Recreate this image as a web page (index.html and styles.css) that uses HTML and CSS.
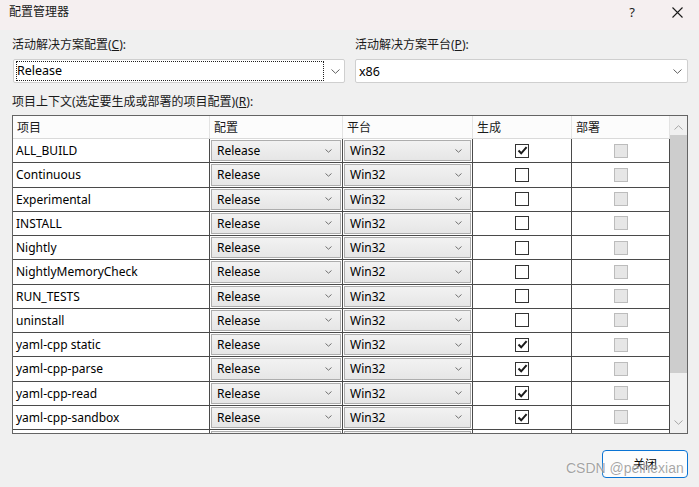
FILE: index.html
```html
<!DOCTYPE html>
<html lang="zh-CN">
<head>
<meta charset="utf-8">
<title>配置管理器</title>
<link rel="stylesheet" href="styles.css">
</head>
<body>
<div class="win">
  <div class="titlebar">
    <span class="title">配置管理器</span>
    <span class="tb-btn help">?</span>
    <span class="tb-btn close"><svg width="11" height="11" viewBox="0 0 11 11"><path d="M0.5 0.5 L10.5 10.5 M10.5 0.5 L0.5 10.5" stroke="#1a1a1a" stroke-width="1.1" fill="none"/></svg></span>
  </div>
  <div class="content">
    <div class="top-fields">
      <div class="field">
        <div class="label">活动解决方案配置(<u>C</u>):</div>
        <div class="combo">
          <span class="focusrect">Release</span>
          <svg class="chev" width="9" height="5" viewBox="0 0 9 5"><path d="M0.5 0.5 L4.5 4.3 L8.5 0.5" stroke="#606060" fill="none"/></svg>
        </div>
      </div>
      <div class="field">
        <div class="label">活动解决方案平台(<u>P</u>):</div>
        <div class="combo">
          <span class="plain">x86</span>
          <svg class="chev" width="9" height="5" viewBox="0 0 9 5"><path d="M0.5 0.5 L4.5 4.3 L8.5 0.5" stroke="#606060" fill="none"/></svg>
        </div>
      </div>
    </div>
    <div class="label ctx">项目上下文(选定要生成或部署的项目配置)(<u>R</u>):</div>
    <div class="grid-wrap">
      <div class="grid">
        <div class="row head">
          <div class="c c1">项目</div><div class="c c2">配置</div><div class="c c3">平台</div><div class="c c4">生成</div><div class="c c5">部署</div>
        </div>
        <div class="row">
          <div class="c c1">ALL_BUILD</div>
          <div class="c c2"><div class="dd">Release<svg class="dchev" width="7" height="4" viewBox="0 0 7 4"><path d="M0.5 0.5 L3.5 3.2 L6.5 0.5" stroke="#707070" fill="none"/></svg></div></div>
          <div class="c c3"><div class="dd">Win32<svg class="dchev" width="7" height="4" viewBox="0 0 7 4"><path d="M0.5 0.5 L3.5 3.2 L6.5 0.5" stroke="#707070" fill="none"/></svg></div></div>
          <div class="c c4"><span class="cb on"><svg width="11" height="11" viewBox="0 0 11 11"><path d="M1.5 5.5 L4.2 8.3 L9.6 2.2" stroke="#1a1a1a" stroke-width="2" fill="none"/></svg></span></div>
          <div class="c c5"><span class="cb dis"></span></div>
        </div>
        <div class="row">
          <div class="c c1">Continuous</div>
          <div class="c c2"><div class="dd">Release<svg class="dchev" width="7" height="4" viewBox="0 0 7 4"><path d="M0.5 0.5 L3.5 3.2 L6.5 0.5" stroke="#707070" fill="none"/></svg></div></div>
          <div class="c c3"><div class="dd">Win32<svg class="dchev" width="7" height="4" viewBox="0 0 7 4"><path d="M0.5 0.5 L3.5 3.2 L6.5 0.5" stroke="#707070" fill="none"/></svg></div></div>
          <div class="c c4"><span class="cb"></span></div>
          <div class="c c5"><span class="cb dis"></span></div>
        </div>
        <div class="row">
          <div class="c c1">Experimental</div>
          <div class="c c2"><div class="dd">Release<svg class="dchev" width="7" height="4" viewBox="0 0 7 4"><path d="M0.5 0.5 L3.5 3.2 L6.5 0.5" stroke="#707070" fill="none"/></svg></div></div>
          <div class="c c3"><div class="dd">Win32<svg class="dchev" width="7" height="4" viewBox="0 0 7 4"><path d="M0.5 0.5 L3.5 3.2 L6.5 0.5" stroke="#707070" fill="none"/></svg></div></div>
          <div class="c c4"><span class="cb"></span></div>
          <div class="c c5"><span class="cb dis"></span></div>
        </div>
        <div class="row">
          <div class="c c1">INSTALL</div>
          <div class="c c2"><div class="dd">Release<svg class="dchev" width="7" height="4" viewBox="0 0 7 4"><path d="M0.5 0.5 L3.5 3.2 L6.5 0.5" stroke="#707070" fill="none"/></svg></div></div>
          <div class="c c3"><div class="dd">Win32<svg class="dchev" width="7" height="4" viewBox="0 0 7 4"><path d="M0.5 0.5 L3.5 3.2 L6.5 0.5" stroke="#707070" fill="none"/></svg></div></div>
          <div class="c c4"><span class="cb"></span></div>
          <div class="c c5"><span class="cb dis"></span></div>
        </div>
        <div class="row">
          <div class="c c1">Nightly</div>
          <div class="c c2"><div class="dd">Release<svg class="dchev" width="7" height="4" viewBox="0 0 7 4"><path d="M0.5 0.5 L3.5 3.2 L6.5 0.5" stroke="#707070" fill="none"/></svg></div></div>
          <div class="c c3"><div class="dd">Win32<svg class="dchev" width="7" height="4" viewBox="0 0 7 4"><path d="M0.5 0.5 L3.5 3.2 L6.5 0.5" stroke="#707070" fill="none"/></svg></div></div>
          <div class="c c4"><span class="cb"></span></div>
          <div class="c c5"><span class="cb dis"></span></div>
        </div>
        <div class="row">
          <div class="c c1">NightlyMemoryCheck</div>
          <div class="c c2"><div class="dd">Release<svg class="dchev" width="7" height="4" viewBox="0 0 7 4"><path d="M0.5 0.5 L3.5 3.2 L6.5 0.5" stroke="#707070" fill="none"/></svg></div></div>
          <div class="c c3"><div class="dd">Win32<svg class="dchev" width="7" height="4" viewBox="0 0 7 4"><path d="M0.5 0.5 L3.5 3.2 L6.5 0.5" stroke="#707070" fill="none"/></svg></div></div>
          <div class="c c4"><span class="cb"></span></div>
          <div class="c c5"><span class="cb dis"></span></div>
        </div>
        <div class="row">
          <div class="c c1">RUN_TESTS</div>
          <div class="c c2"><div class="dd">Release<svg class="dchev" width="7" height="4" viewBox="0 0 7 4"><path d="M0.5 0.5 L3.5 3.2 L6.5 0.5" stroke="#707070" fill="none"/></svg></div></div>
          <div class="c c3"><div class="dd">Win32<svg class="dchev" width="7" height="4" viewBox="0 0 7 4"><path d="M0.5 0.5 L3.5 3.2 L6.5 0.5" stroke="#707070" fill="none"/></svg></div></div>
          <div class="c c4"><span class="cb"></span></div>
          <div class="c c5"><span class="cb dis"></span></div>
        </div>
        <div class="row">
          <div class="c c1">uninstall</div>
          <div class="c c2"><div class="dd">Release<svg class="dchev" width="7" height="4" viewBox="0 0 7 4"><path d="M0.5 0.5 L3.5 3.2 L6.5 0.5" stroke="#707070" fill="none"/></svg></div></div>
          <div class="c c3"><div class="dd">Win32<svg class="dchev" width="7" height="4" viewBox="0 0 7 4"><path d="M0.5 0.5 L3.5 3.2 L6.5 0.5" stroke="#707070" fill="none"/></svg></div></div>
          <div class="c c4"><span class="cb"></span></div>
          <div class="c c5"><span class="cb dis"></span></div>
        </div>
        <div class="row">
          <div class="c c1">yaml-cpp static</div>
          <div class="c c2"><div class="dd">Release<svg class="dchev" width="7" height="4" viewBox="0 0 7 4"><path d="M0.5 0.5 L3.5 3.2 L6.5 0.5" stroke="#707070" fill="none"/></svg></div></div>
          <div class="c c3"><div class="dd">Win32<svg class="dchev" width="7" height="4" viewBox="0 0 7 4"><path d="M0.5 0.5 L3.5 3.2 L6.5 0.5" stroke="#707070" fill="none"/></svg></div></div>
          <div class="c c4"><span class="cb on"><svg width="11" height="11" viewBox="0 0 11 11"><path d="M1.5 5.5 L4.2 8.3 L9.6 2.2" stroke="#1a1a1a" stroke-width="2" fill="none"/></svg></span></div>
          <div class="c c5"><span class="cb dis"></span></div>
        </div>
        <div class="row">
          <div class="c c1">yaml-cpp-parse</div>
          <div class="c c2"><div class="dd">Release<svg class="dchev" width="7" height="4" viewBox="0 0 7 4"><path d="M0.5 0.5 L3.5 3.2 L6.5 0.5" stroke="#707070" fill="none"/></svg></div></div>
          <div class="c c3"><div class="dd">Win32<svg class="dchev" width="7" height="4" viewBox="0 0 7 4"><path d="M0.5 0.5 L3.5 3.2 L6.5 0.5" stroke="#707070" fill="none"/></svg></div></div>
          <div class="c c4"><span class="cb on"><svg width="11" height="11" viewBox="0 0 11 11"><path d="M1.5 5.5 L4.2 8.3 L9.6 2.2" stroke="#1a1a1a" stroke-width="2" fill="none"/></svg></span></div>
          <div class="c c5"><span class="cb dis"></span></div>
        </div>
        <div class="row">
          <div class="c c1">yaml-cpp-read</div>
          <div class="c c2"><div class="dd">Release<svg class="dchev" width="7" height="4" viewBox="0 0 7 4"><path d="M0.5 0.5 L3.5 3.2 L6.5 0.5" stroke="#707070" fill="none"/></svg></div></div>
          <div class="c c3"><div class="dd">Win32<svg class="dchev" width="7" height="4" viewBox="0 0 7 4"><path d="M0.5 0.5 L3.5 3.2 L6.5 0.5" stroke="#707070" fill="none"/></svg></div></div>
          <div class="c c4"><span class="cb on"><svg width="11" height="11" viewBox="0 0 11 11"><path d="M1.5 5.5 L4.2 8.3 L9.6 2.2" stroke="#1a1a1a" stroke-width="2" fill="none"/></svg></span></div>
          <div class="c c5"><span class="cb dis"></span></div>
        </div>
        <div class="row">
          <div class="c c1">yaml-cpp-sandbox</div>
          <div class="c c2"><div class="dd">Release<svg class="dchev" width="7" height="4" viewBox="0 0 7 4"><path d="M0.5 0.5 L3.5 3.2 L6.5 0.5" stroke="#707070" fill="none"/></svg></div></div>
          <div class="c c3"><div class="dd">Win32<svg class="dchev" width="7" height="4" viewBox="0 0 7 4"><path d="M0.5 0.5 L3.5 3.2 L6.5 0.5" stroke="#707070" fill="none"/></svg></div></div>
          <div class="c c4"><span class="cb on"><svg width="11" height="11" viewBox="0 0 11 11"><path d="M1.5 5.5 L4.2 8.3 L9.6 2.2" stroke="#1a1a1a" stroke-width="2" fill="none"/></svg></span></div>
          <div class="c c5"><span class="cb dis"></span></div>
        </div>
        <div class="row">
          <div class="c c1"></div>
          <div class="c c2"><div class="dd"></div></div>
          <div class="c c3"><div class="dd"></div></div>
          <div class="c c4"></div>
          <div class="c c5"></div>
        </div>
      </div>
      <div class="vscroll">
        <svg class="sarrow" width="9" height="5" viewBox="0 0 9 5"><path d="M0.5 4.5 L4.5 0.7 L8.5 4.5" stroke="#a6a6a6" fill="none"/></svg>
        <div class="thumb"></div>
        <div class="track"></div>
        <svg class="sarrow" width="9" height="5" viewBox="0 0 9 5"><path d="M0.5 0.5 L4.5 4.3 L8.5 0.5" stroke="#a6a6a6" fill="none"/></svg>
      </div>
    </div>
    <div class="footer">
      <div class="btn">关闭</div>
    </div>
  </div>
  <div class="watermark">CSDN @peihexian</div>
</div>
</body>
</html>
```

FILE: styles.css
```css
* { box-sizing: border-box; }
html, body { margin: 0; padding: 0; }
body {
  width: 699px;
  height: 487px;
  overflow: hidden;
  background: #f0f0f0;
  font-family: "Noto Sans", "Noto Sans CJK SC", sans-serif;
  font-size: 12px;
  color: #000;
}
.win {
  position: relative;
  width: 699px;
  height: 487px;
}
.titlebar {
  height: 30px;
  display: flex;
  align-items: flex-start;
  background: #f5eff0;
}
.title {
  padding-left: 9px;
  line-height: 24px;
  flex: 1;
  color: #1a1a1a;
}
.tb-btn {
  height: 24px;
  display: flex;
  align-items: center;
  justify-content: center;
}
.help { width: 46px; font-size: 13px; color: #1a1a1a; }
.close { width: 44px; }
.content {
  padding: 0 11px 0 12px;
}
.top-fields {
  display: grid;
  grid-template-columns: 333px 333px;
  column-gap: 10px;
  margin-top: 6px;
}
.label {
  line-height: 18px;
  height: 18px;
  color: #1a1a1a;
}
.field .label { margin-bottom: 5px; }
.combo {
  height: 24px;
  background: #fff;
  border: 1px solid #cfcfcf;
  border-radius: 2px;
  display: flex;
  align-items: center;
  padding: 2px 4px 2px 2px;
  font-size: 12.5px;
}
.field:first-child .combo { margin-left: 1px; }
.field:last-child .combo { padding-right: 5px; }
.focusrect {
  flex: 1;
  height: 20px;
  line-height: 18px;
  padding-left: 0;
  border: 1px dotted #202020;
  margin-right: 7px;
}
.plain { flex: 1; padding-left: 1px; }
.chev { flex: none; }
.ctx { margin-top: 10px; }
.grid-wrap {
  margin-top: 4px;
  height: 319px;
  width: 676px;
  border: 1px solid #646464;
  display: flex;
  overflow: hidden;
}
.grid {
  width: 657px;
  flex: none;
  overflow: hidden;
  background: #fff;
}
.row {
  display: flex;
  height: 24.25px;
  border-bottom: 1px solid #4a4a4a;
}
.row.head {
  height: 23px;
  background: #fcfcfc;
  border-bottom: 1px solid #dadada;
}
.c {
  border-right: 1px solid #4a4a4a;
  display: flex;
  align-items: center;
  height: 100%;
}
.head .c { border-right-color: #e3e3e3; padding-left: 4px; color: #1a1a1a; justify-content: flex-start; }
.c1 { width: 197px; padding-left: 3px; }
.c2 { width: 133px; padding: 1px; }
.c3 { width: 130px; padding: 1px; }
.c4 { width: 99px; justify-content: center; }
.c5 { width: 98px; justify-content: center; }
.dd {
  width: 100%;
  height: 100%;
  border: 1px solid #adadad;
  background: linear-gradient(#f2f2f2, #e6e6e6);
  display: flex;
  align-items: center;
  padding: 0 8px 0 5px;
  justify-content: space-between;
}
.dchev { flex: none; }
.cb {
  width: 14px;
  height: 14px;
  border: 1px solid #333;
  background: #fff;
  display: flex;
  align-items: center;
  justify-content: center;
}
.cb.dis {
  border-color: #bcbcbc;
  background: #e6e6e6;
}
.vscroll {
  width: 17px;
  flex: none;
  background: #f0f0f0;
  display: flex;
  flex-direction: column;
  align-items: center;
}
.vscroll .sarrow:first-child { margin-top: 9px; }
.thumb {
  width: 17px;
  height: 238px;
  margin-top: 5px;
  background: #cdcdcd;
}
.track { flex: 1; }
.vscroll .sarrow:last-child { margin-bottom: 8px; }
.footer {
  display: flex;
  justify-content: flex-end;
  margin-top: 16px;
}
.btn {
  width: 86px;
  height: 28px;
  border: 1px solid #0a74d4;
  border-radius: 4px;
  background: #fdfdfd;
  display: flex;
  align-items: center;
  justify-content: center;
  color: #000;
}
.watermark {
  position: absolute;
  left: 566px;
  top: 460px;
  font-family: "Liberation Sans", sans-serif;
  font-size: 14px;
  color: rgba(90, 90, 90, 0.55);
  text-shadow: 0 0 2px #fff;
  pointer-events: none;
}
```
